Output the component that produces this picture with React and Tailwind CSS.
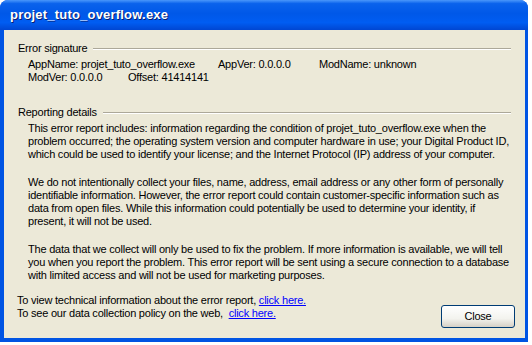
import React from 'react';

const font = { fontFamily: '"Liberation Sans", Arial, sans-serif' };

// Etched group heading: label followed by a sunken rule
const GroupLabel = ({ children }) => (
  <div className="flex items-center h-[13px]">
    <span className="pr-[6px] whitespace-nowrap">{children}</span>
    <div className="flex-1 mr-[14px] border-t border-[#aca899] border-b border-b-white h-0" />
  </div>
);

const Link = ({ children }) => (
  <a href="#" className="text-[#0000ff] underline">{children}</a>
);

export default function App() {
  return (
    <div className="w-[532px] h-[345px] bg-white" style={font}>
      <div className="w-[528px] h-[342px] flex flex-col rounded-t-[8px] overflow-hidden bg-[#0054e3]">
        {/* Title bar */}
        <div className="h-[30px] shrink-0 flex items-center pl-[10px] bg-[linear-gradient(to_bottom,#4a97fb_0%,#0a62ec_12%,#0058e8_45%,#005df2_75%,#0046d2_100%)]">
          <span className="text-white font-bold text-[13px] tracking-[0.2px] [text-shadow:1px_1px_0_#0a1e6e]">
            projet_tuto_overflow.exe
          </span>
        </div>

        {/* Client area */}
        <div className="flex-1 ml-[4px] mr-[3px] mb-[4px] bg-[#ece9d8] text-black text-[11px] leading-[13px] tracking-[-0.22px] whitespace-nowrap flex flex-col pl-[14px] pt-[12px]">
          <GroupLabel>Error signature</GroupLabel>
          <div className="pl-[10px] pt-[3px]">
            <div className="flex">
              <span className="w-[190px]">AppName: projet_tuto_overflow.exe</span>
              <span className="w-[101px]">AppVer: 0.0.0.0</span>
              <span>ModName: unknown</span>
            </div>
            <div className="flex">
              <span className="w-[100px]">ModVer: 0.0.0.0</span>
              <span>Offset: 41414141</span>
            </div>
          </div>

          <div className="mt-[22px]">
            <GroupLabel>Reporting details</GroupLabel>
          </div>
          <div className="pl-[10px] pt-[3px]">
            <p>
              This error report includes: information regarding the condition of projet_tuto_overflow.exe when the<br />
              problem occurred; the operating system version and computer hardware in use; your Digital Product ID,<br />
              which could be used to identify your license; and the Internet Protocol (IP) address of your computer.
            </p>
            <p className="mt-[15px]">
              We do not intentionally collect your files, name, address, email address or any other form of personally<br />
              identifiable information. However, the error report could contain customer-specific information such as<br />
              data from open files. While this information could potentially be used to determine your identity, if<br />
              present, it will not be used.
            </p>
            <p className="mt-[15px]">
              The data that we collect will only be used to fix the problem. If more information is available, we will tell<br />
              you when you report the problem. This error report will be sent using a secure connection to a database<br />
              with limited access and will not be used for marketing purposes.
            </p>
          </div>

          <div className="flex mt-[12px] pr-[10px]">
            <div className="flex-1 -ml-[1px]">
              <div>To view technical information about the error report, <Link>click here.</Link></div>
              <div>To see our data collection policy on the web,&nbsp; <Link>click here.</Link></div>
            </div>
            <button className="mt-[11px] w-[74px] h-[23px] border border-[#003c74] rounded-[3px] bg-[linear-gradient(to_bottom,#ffffff,#f3f3ee_60%,#d6d0c5)] text-[11px] text-black">
              Close
            </button>
          </div>
        </div>
      </div>
    </div>
  );
}
